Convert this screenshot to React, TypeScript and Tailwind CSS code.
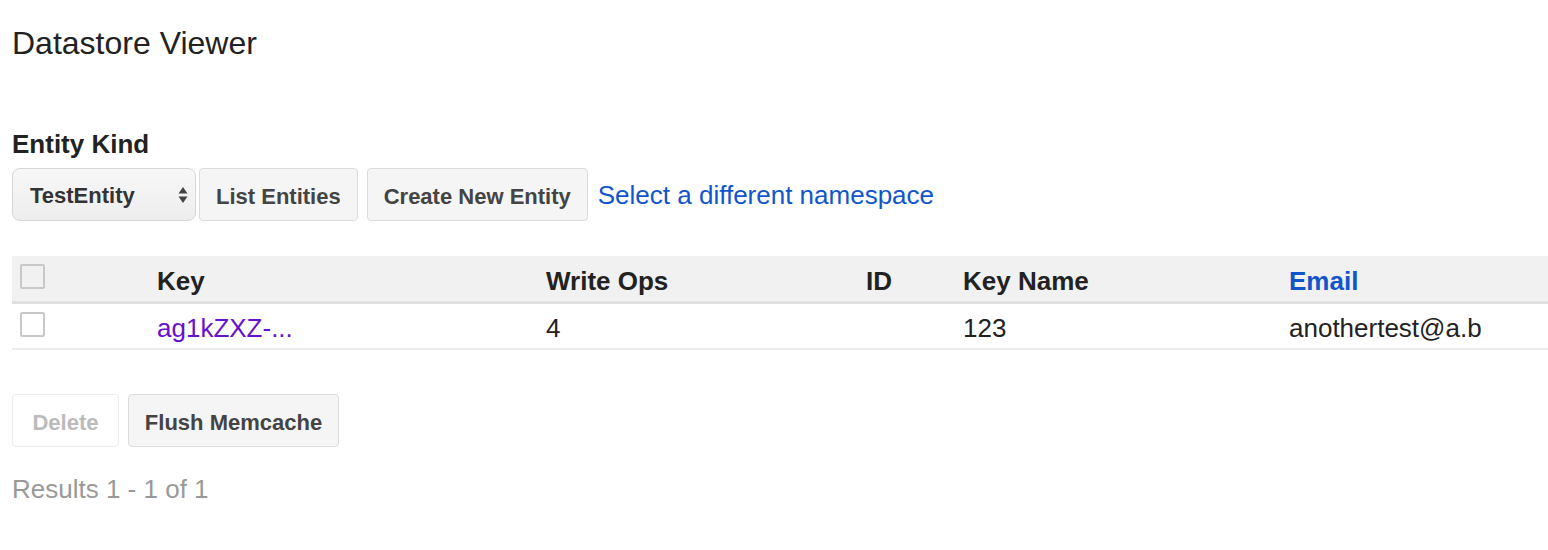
import React from "react";

const font = { fontFamily: '"Liberation Sans", Arial, Helvetica, sans-serif' };

function Checkbox() {
  return <div className="w-[25px] h-[25px] border-2 border-[#c8c8c8] rounded-[2px]" />;
}

export default function App() {
  return (
    <div className="w-[1548px] h-[550px] bg-white text-[#222] overflow-hidden" style={font}>
      <div className="pl-[12px]">
        <div className="pt-[25px] h-[61px] text-[32px] leading-[36px] text-[#222]">Datastore Viewer</div>
        <div className="mt-[68px] h-[30px] text-[26px] leading-[30px] font-bold text-[#222]">Entity Kind</div>
        <div className="mt-[9px] flex items-center h-[53px]">
          <div className="relative w-[184px] h-[53px] rounded-[8px] border border-[#d6d6d6] bg-gradient-to-b from-[#f8f8f8] to-[#ededed] flex items-center pl-[17px] pt-[2px]">
            <span className="text-[22px] font-bold text-[#333] leading-none">TestEntity</span>
            <svg className="absolute left-[165px] top-[18px]" width="10" height="17" viewBox="0 0 10 17">
              <path d="M5 0 L9.5 6.5 L0.5 6.5 Z" fill="#444" />
              <path d="M5 16 L9.5 9.5 L0.5 9.5 Z" fill="#444" />
            </svg>
          </div>
          <button className="ml-[3px] h-[53px] px-[16px] pt-[3px] rounded-[4px] border border-[#dcdcdc] bg-[#f5f5f5] text-[22px] font-bold text-[#444]">List Entities</button>
          <button className="ml-[9px] h-[53px] px-[16px] pt-[3px] rounded-[4px] border border-[#dcdcdc] bg-[#f5f5f5] text-[22px] font-bold text-[#444]">Create New Entity</button>
          <a className="ml-[10px] text-[26px] text-[#1155cc] leading-[30px]">Select a different namespace</a>
        </div>
        <div className="mt-[35px] w-[1536px]">
          <div className="grid grid-cols-[145px_389px_320px_97px_326px_1fr] h-[45px] bg-[#f1f1f1] border-b-[3px] border-[#e0e0e0] box-content">
            <div className="pt-[8px] pl-[8px]"><Checkbox /></div>
            <div className="pt-[10px] text-[26px] leading-[30px] font-bold">Key</div>
            <div className="pt-[10px] text-[26px] leading-[30px] font-bold">Write Ops</div>
            <div className="pt-[10px] text-[26px] leading-[30px] font-bold">ID</div>
            <div className="pt-[10px] text-[26px] leading-[30px] font-bold">Key Name</div>
            <div className="pt-[10px] text-[26px] leading-[30px] font-bold text-[#1155cc]">Email</div>
          </div>
          <div className="grid grid-cols-[145px_389px_320px_97px_326px_1fr] h-[44px] border-b-2 border-[#ececec] box-content">
            <div className="pt-[8px] pl-[8px]"><Checkbox /></div>
            <div className="pt-[9px] text-[26px] leading-[30px] text-[#6611cc]">ag1kZXZ-...</div>
            <div className="pt-[9px] text-[26px] leading-[30px]">4</div>
            <div className="pt-[9px] text-[26px] leading-[30px]"></div>
            <div className="pt-[9px] text-[26px] leading-[30px]">123</div>
            <div className="pt-[9px] text-[26px] leading-[30px]">anothertest@a.b</div>
          </div>
        </div>
        <div className="mt-[44px] flex h-[53px]">
          <button className="h-[53px] w-[107px] pt-[3px] rounded-[4px] border border-[#ececec] bg-white text-[22px] font-bold text-[#bbbbbb]">Delete</button>
          <button className="ml-[9px] h-[53px] w-[211px] pt-[3px] rounded-[4px] border border-[#dcdcdc] bg-[#f5f5f5] text-[22px] font-bold text-[#444]">Flush Memcache</button>
        </div>
        <div className="mt-[27px] text-[26px] leading-[30px] text-[#999]">Results 1 - 1 of 1</div>
      </div>
    </div>
  );
}
